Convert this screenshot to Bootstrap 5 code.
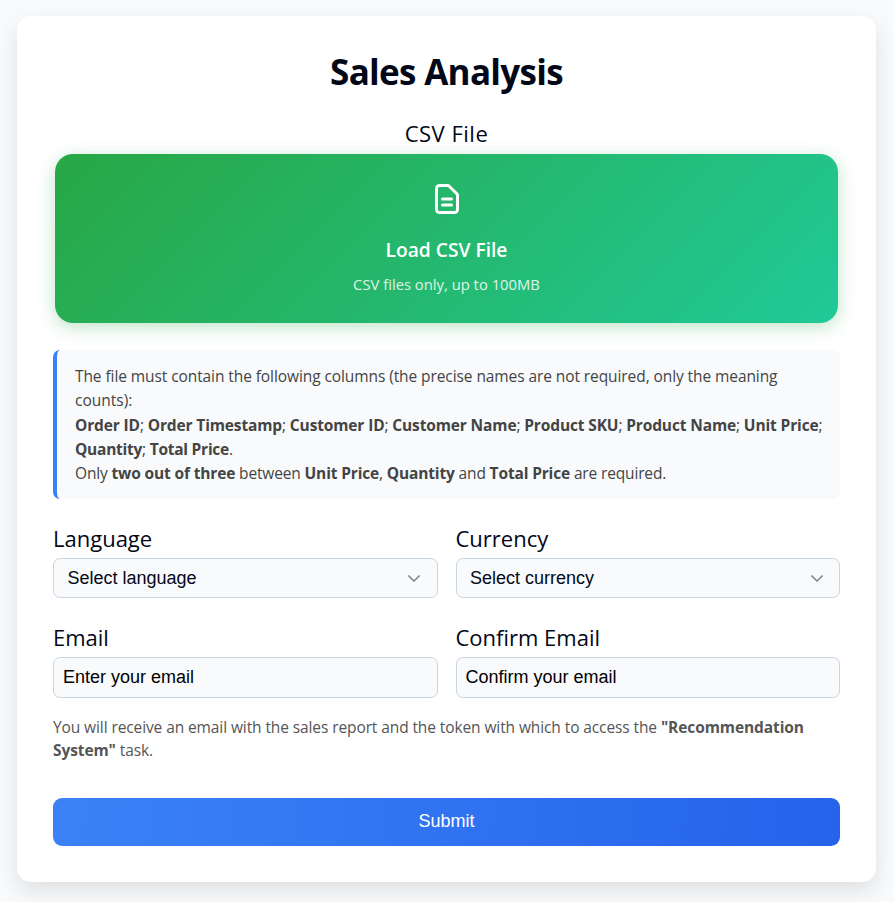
<!DOCTYPE html>
<html lang="en">
<head>
<meta charset="utf-8">
<meta name="viewport" content="width=device-width, initial-scale=1">
<title>Sales Analysis</title>
<link href="https://cdn.jsdelivr.net/npm/bootstrap@5.3.0/dist/css/bootstrap.min.css" rel="stylesheet">
<style>
  body { background: #f8fafc; color: #020817; font-family: "Segoe UI", "Open Sans", "Noto Sans", sans-serif; padding: 16px 18px 20px 17px; }
  .panel { background: #fff; border-radius: 14px; padding: 36px; height: 866px; box-shadow: 0 9px 22px rgba(0,0,0,.105); }
  .page-title { font-size: 35px; line-height: 40px; height: 42px; margin: 0 0 24px; font-weight: 700; letter-spacing: -.7px; }
  .field-label { display: block; font-size: 22px; line-height: 30px; margin: 0; }
  .label-top { letter-spacing: .5px; }
  .drop-zone { margin: 6px 2px 27px; height: 169px; padding-top: 27px; border-radius: 18px; color: #fff; background: linear-gradient(135deg, #28a745, #20c997); box-shadow: 0 4px 18px rgba(40,167,69,.3); }
  .drop-title { font-size: 19.2px; font-weight: 600; line-height: 28px; margin-top: 19px; }
  .drop-hint { font-size: 14.8px; line-height: 22px; margin-top: 9px; opacity: .85; }
  .info-box { background: #f8fafc; border-left: 4px solid #3b82f6; border-radius: 7px; height: 149px; padding: 14px 14px 13px 18px; font-size: 15.5px; line-height: 24.3px; color: #444; margin-bottom: 24px; }
  .fields { display: grid; grid-template-columns: 1fr 1fr; column-gap: 18px; row-gap: 24px; }
  .field-box { font-family: "Liberation Sans", Arial, sans-serif; font-size: 18px; line-height: 24px; background: #f8fafc; border: 1px solid #cbd5e1; border-radius: 7px; margin-top: 5px; color: #020817; }
  .field-select { height: 40px; padding: 0 15.5px 0 13.5px; }
  .field-input { height: 41px; padding: 0 9px; width: 100%; display: block; color: #000; }
  .field-input::placeholder { color: #000; opacity: 1; }
  .help-text { font-size: 15.5px; line-height: 23px; color: #555; margin: 18px 0 36px; letter-spacing: -.1px; }
  .submit-btn { font-family: "Liberation Sans", Arial, sans-serif; font-size: 18px; height: 48px; border: 0; border-radius: 9px; color: #fff; padding: 0 0 2px; background: linear-gradient(95deg, #3b82f6, #2563eb); }
  .ln { display: block; white-space: nowrap; }
  .ln-intro { letter-spacing: -.085px; }
  .ln-names { letter-spacing: -.137px; }
  .ln-totals { letter-spacing: -.25px; }
  .ln-rule { letter-spacing: -.15px; }
</style>
</head>
<body>
<main class="panel">
  <h1 class="page-title text-center">Sales Analysis</h1>
  <form>
    <span class="field-label label-top text-center">CSV File</span>
    <div class="drop-zone text-center d-flex flex-column align-items-center">
      <svg width="36" height="36" viewBox="0 0 24 24" fill="none" stroke="currentColor" stroke-width="2" stroke-linecap="round" stroke-linejoin="round"><path d="M9 12h6m-6 4h6m2 5H7a2 2 0 01-2-2V5a2 2 0 012-2h5.586a1 1 0 01.707.293l5.414 5.414a1 1 0 01.293.707V19a2 2 0 01-2 2z"/></svg>
      <div class="drop-title">Load CSV File</div>
      <div class="drop-hint">CSV files only, up to 100MB</div>
    </div>
    <div class="info-box">
      <span class="ln ln-intro">The file must contain the following columns (the precise names are not required, only the meaning</span>
      <span class="ln">counts):</span>
      <span class="ln ln-names"><b>Order ID</b>; <b>Order Timestamp</b>; <b>Customer ID</b>; <b>Customer Name</b>; <b>Product SKU</b>; <b>Product Name</b>; <b>Unit Price</b>;</span>
      <span class="ln ln-totals"><b>Quantity</b>; <b>Total Price</b>.</span>
      <span class="ln ln-rule">Only <b>two out of three</b> between <b>Unit Price</b>, <b>Quantity</b> and <b>Total Price</b> are required.</span>
    </div>
    <div class="fields">
      <div>
        <span class="field-label">Language</span>
        <div class="field-box field-select d-flex align-items-center justify-content-between"><span>Select language</span>
          <svg width="14" height="9" viewBox="0 0 14 9" fill="none" stroke="#808080" stroke-width="1.5"><path d="M1.3 1.5L7 7l5.7-5.5"/></svg></div>
      </div>
      <div>
        <span class="field-label">Currency</span>
        <div class="field-box field-select d-flex align-items-center justify-content-between"><span>Select currency</span>
          <svg width="14" height="9" viewBox="0 0 14 9" fill="none" stroke="#808080" stroke-width="1.5"><path d="M1.3 1.5L7 7l5.7-5.5"/></svg></div>
      </div>
      <div>
        <label class="field-label" for="email">Email</label>
        <input id="email" type="email" class="field-box field-input" placeholder="Enter your email">
      </div>
      <div>
        <label class="field-label" for="confirm">Confirm Email</label>
        <input id="confirm" type="email" class="field-box field-input" placeholder="Confirm your email">
      </div>
    </div>
    <p class="help-text"><span class="ln">You will receive an email with the sales report and the token with which to access the <b>"Recommendation</b></span>
      <span class="ln"><b>System"</b> task.</span></p>
    <button type="button" class="submit-btn w-100">Submit</button>
  </form>
</main>
<script src="https://cdn.jsdelivr.net/npm/bootstrap@5.3.0/dist/js/bootstrap.bundle.min.js"></script>
</body>
</html>
